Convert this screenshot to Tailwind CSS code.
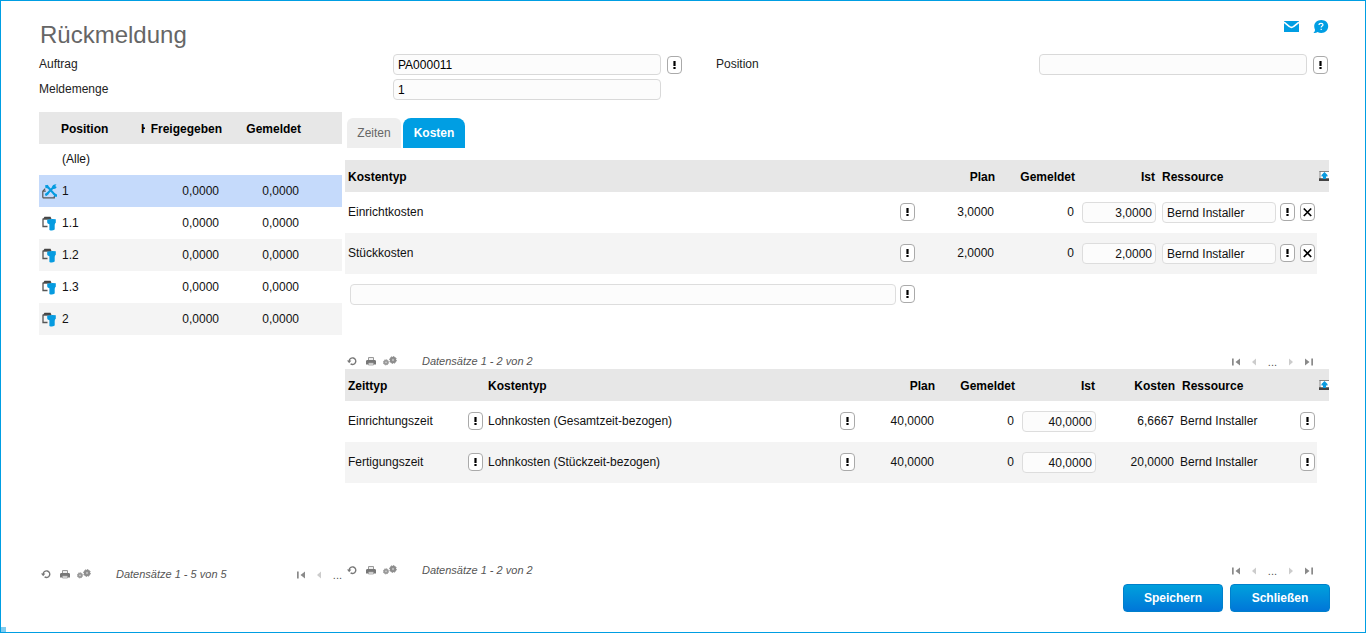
<!DOCTYPE html>
<html lang="de">
<head>
<meta charset="utf-8">
<meta name="viewport" content="width=device-width, initial-scale=1">
<title>Rückmeldung</title>
<script src="https://cdn.jsdelivr.net/npm/@tailwindcss/browser@4"></script>
</head>
<body class="bg-white font-['Liberation_Sans',Arial,sans-serif] text-[12px] leading-4 text-black">

<svg class="hidden" aria-hidden="true">
  <symbol id="i-bang" viewBox="0 0 15 18"><path d="M6.400 5h2.200v5H6.400zM6.400 11h2.200v2H6.400z" fill="#000"/></symbol>
  <symbol id="i-cross" viewBox="0 0 15 18"><path d="M3.800 5.500L11.200 13M11.200 5.500L3.800 13" stroke="#000" stroke-width="1.700" fill="none"/></symbol>
  <symbol id="i-reload" viewBox="0 0 10 10"><path d="M2.200 5A3.300 3.300 0 1 1 3.600 7.900" stroke="#777" stroke-width="1.400" fill="none"/><path d="M0 4.600h4.400L2.200 7.200z" fill="#777"/></symbol>
  <symbol id="i-print" viewBox="0 0 10 10"><path d="M2.500 4V1.500h5V4" fill="#eee" stroke="#999" stroke-width="1"/><path d="M.8 4h8.400L10 5V8.500H0V5z" fill="#777"/><path d="M2.500 7h5v2h-5z" fill="#eee" stroke="#999" stroke-width=".8"/></symbol>
  <symbol id="i-gears" viewBox="0 0 14 10"><circle cx="3" cy="6.300" r="2.600" fill="#999"/><circle cx="3" cy="6.300" r="2.700" fill="none" stroke="#999" stroke-width=".8" stroke-dasharray="1.200 .9"/><circle cx="3" cy="6.300" r=".9" fill="#ccc"/><circle cx="10" cy="4" r="3.200" fill="#8c8c8c"/><circle cx="10" cy="4" r="3.400" fill="none" stroke="#8c8c8c" stroke-width="1" stroke-dasharray="1.500 1.100"/><circle cx="10" cy="4" r="1.200" fill="#bbb"/></symbol>
  <symbol id="i-first" viewBox="0 0 8 8"><path d="M0 .5h1.700v7H0zM8 .5v7L3.500 4z" fill="#8a8a8a"/></symbol>
  <symbol id="i-last" viewBox="0 0 8 8"><path d="M6.300 .5H8v7H6.300zM0 .5v7L4.500 4z" fill="#8a8a8a"/></symbol>
  <symbol id="i-prev" viewBox="0 0 4 8"><path d="M4 .5v7L0 4z" fill="#ccc"/></symbol>
  <symbol id="i-next" viewBox="0 0 4 8"><path d="M0 .5v7L4 4z" fill="#ccc"/></symbol>
  <symbol id="i-export" viewBox="0 0 10 10"><path d="M.5 0h9.500v7H.5z" fill="#fff"/><path d="M.5 .5h9.500M1 0v8" stroke="#777" stroke-width=".9" fill="none"/><path d="M0 7.300h10V10H0z" fill="#444"/><path d="M4 8V5.500H2.500V4l3-3 3 3v1.500H7V8z" fill="#0a9be0"/></symbol>
  <symbol id="i-part" viewBox="0 0 15 15"><path d="M1 3L2.500 .8h6L9.500 3z" fill="#444"/><path d="M5.500 10.500H1V3.200h8" fill="none" stroke="#555" stroke-width="1.300"/><path d="M5.200 3.800Q9.500 2.300 13.800 3.300V6.800Q12.800 7.400 12.700 9V13.600Q10 15.200 7.400 14V8.200Q5.200 7.800 5.200 6.500z" fill="#069be0"/></symbol>
  <symbol id="i-tools" viewBox="0 0 15 15"><path d="M.8 13.800V7.200L3.200 4.700M.8 7.200h3M.8 13.800h11.500V12" fill="none" stroke="#555" stroke-width="1.200"/><path d="M4.500 1.500L13 11M13 1.500L4 11" stroke="#069be0" stroke-width="2" fill="none"/><path d="M10 3.500Q10.300 .3 14.500 .3L13 2.200 14.800 3Q13.500 5.600 10.800 4.800zM3.300 1l3 .3-.6 3.200-2.400-.8zM2.800 10l3-2 1 2-3 2.200zM11 8.500l4 2v2.200h-2.500z" fill="#069be0"/></symbol>
</svg>

<main class="relative flex min-h-screen flex-col border border-[#009ee3] pt-[18px] pr-9 pb-5 pl-[38px]">
  <header class="flex items-start justify-between">
    <h1 class="pl-px text-2xl leading-8 text-[#666]">Rückmeldung</h1>
    <div class="flex gap-3.5 pt-px">
      <a href="#" aria-label="Nachricht"><svg class="h-3.5 w-4" viewBox="0 0 16 14"><path d="M1 1h15v11H1z" fill="#009ee3"/><path d="M1 2.200L6.500 6.500Q8.500 8.200 10.500 6.500L16 2.200" fill="none" stroke="#fff" stroke-width="1.600"/></svg></a>
      <a href="#" aria-label="Hilfe"><svg class="h-3.5 w-4" viewBox="0 0 16 14"><path d="M8.300 0C12.500 0 15.200 2.800 15.200 6.300S12.500 13 8.300 13C6.800 13 5.600 12.700 4.500 12.100 3.500 12.900 2 13.200 .4 13.100 1.500 12.200 2 11 2 9.800 1.500 8.800 1.200 7.600 1.200 6.300 1.200 2.800 4.200 0 8.300 0z" fill="#009ee3"/><path d="M6 5Q6 3.300 8 3.300T10 4.800Q10 5.700 8.800 6.200 8.200 6.500 8.200 7.600M8.200 8.700V10" fill="none" stroke="#fff" stroke-width="1.200"/></svg></a>
    </div>
  </header>

  <form class="mt-[3px] grid grid-cols-[354px_minmax(0,1fr)_21px_34px_323px_minmax(0,1fr)_22px] items-center gap-y-1 text-[#222]">
    <label for="auftrag" class="pb-0.5">Auftrag</label>
    <input id="auftrag" type="text" value="PA000011" class="h-[21px] w-full rounded border border-[#d9d9d9] bg-[#fcfcfc] px-1 text-black">
    <button type="button" aria-label="Auftrag wählen" class="ml-1.5 h-[18px] w-[15px] rounded border border-[#aaa] bg-white"><svg class="-m-px h-[18px] w-[15px]"><use href="#i-bang"/></svg></button>
    <span></span>
    <label for="position" class="pb-0.5">Position</label>
    <input id="position" type="text" class="h-[21px] w-full rounded border border-[#d9d9d9] bg-[#fcfcfc] px-1 text-black">
    <button type="button" aria-label="Position wählen" class="ml-1.5 h-[18px] w-[15px] rounded border border-[#aaa] bg-white"><svg class="-m-px h-[18px] w-[15px]"><use href="#i-bang"/></svg></button>
    <label for="menge" class="pb-0.5">Meldemenge</label>
    <input id="menge" type="text" value="1" class="h-[21px] w-full rounded border border-[#d9d9d9] bg-[#fcfcfc] px-1 text-black">
  </form>

  <div class="mt-3 grid grow grid-cols-[303px_minmax(0,1fr)] gap-x-[3px]">
    <section class="flex flex-col justify-between overflow-hidden" aria-label="Positionen">
      <table class="w-full table-fixed">
        <colgroup><col class="w-5"><col class="w-[82px]"><col class="w-1"><col class="w-[79px]"><col class="w-20"><col></colgroup>
        <thead>
          <tr class="h-8 bg-[#e7e7e7]">
            <th class="pt-0.5"></th><th class="pt-0.5 pl-0.5 text-left">Position</th>
            <th class="pt-0.5 text-left"><div class="overflow-hidden">H</div></th>
            <th class="pt-0.5 pr-0.5 text-right">Freigegeben</th><th class="pt-0.5 pr-[3px] text-right">Gemeldet</th><th></th>
          </tr>
        </thead>
        <tbody class="text-[#111]">
          <tr class="h-[31px]"><td></td><td class="pb-0.5 pl-[3px]">(Alle)</td><td></td><td></td><td></td><td></td></tr>
          <tr class="h-8 bg-[#c5dafb]"><td class="pl-[3px]"><svg class="h-[15px] w-[15px]"><use href="#i-tools"/></svg></td><td class="pl-[3px]">1</td><td></td><td class="pr-[5px] text-right">0,0000</td><td class="pr-[5px] text-right">0,0000</td><td></td></tr>
          <tr class="h-8"><td class="pl-[3px]"><svg class="h-[15px] w-[15px]"><use href="#i-part"/></svg></td><td class="pl-[3px]">1.1</td><td></td><td class="pr-[5px] text-right">0,0000</td><td class="pr-[5px] text-right">0,0000</td><td></td></tr>
          <tr class="h-8 bg-[#f4f4f4]"><td class="pl-[3px]"><svg class="h-[15px] w-[15px]"><use href="#i-part"/></svg></td><td class="pl-[3px]">1.2</td><td></td><td class="pr-[5px] text-right">0,0000</td><td class="pr-[5px] text-right">0,0000</td><td></td></tr>
          <tr class="h-8"><td class="pl-[3px]"><svg class="h-[15px] w-[15px]"><use href="#i-part"/></svg></td><td class="pl-[3px]">1.3</td><td></td><td class="pr-[5px] text-right">0,0000</td><td class="pr-[5px] text-right">0,0000</td><td></td></tr>
          <tr class="h-8 bg-[#f4f4f4]"><td class="pl-[3px]"><svg class="h-[15px] w-[15px]"><use href="#i-part"/></svg></td><td class="pl-[3px]">2</td><td></td><td class="pr-[5px] text-right">0,0000</td><td class="pr-[5px] text-right">0,0000</td><td></td></tr>
        </tbody>
      </table>
      <footer class="flex h-4 items-center justify-between text-[11px] text-[#555]">
        <div class="flex items-center pl-0.5">
          <button type="button" aria-label="Aktualisieren"><svg class="h-2.5 w-2.5"><use href="#i-reload"/></svg></button>
          <button type="button" aria-label="Drucken" class="ml-[9px]"><svg class="h-2.5 w-2.5"><use href="#i-print"/></svg></button>
          <button type="button" aria-label="Einstellungen" class="ml-[7px]"><svg class="h-2.5 w-3.5"><use href="#i-gears"/></svg></button>
          <em class="ml-[25px]">Datensätze 1 - 5 von 5</em>
        </div>
        <div class="flex items-center pt-0.5">
          <button type="button" aria-label="Erste Seite"><svg class="h-2 w-2"><use href="#i-first"/></svg></button>
          <button type="button" aria-label="Vorherige Seite" class="ml-3"><svg class="h-2 w-1"><use href="#i-prev"/></svg></button>
          <span class="ml-3">...</span>
        </div>
      </footer>
    </section>

    <section class="min-w-0 pt-1.5 pb-1">
      <nav class="flex h-[30px] gap-0.5 pl-0.5" role="tablist">
        <button type="button" role="tab" class="w-[54px] rounded-t-md bg-[#eee] text-[#666]">Zeiten</button>
        <button type="button" role="tab" aria-selected="true" class="w-[62px] rounded-t-lg bg-[#009ee3] font-bold text-white">Kosten</button>
      </nav>

      <div class="mt-3 flex min-h-[209px] flex-col justify-between">
        <table class="w-full table-fixed text-[#111]">
          <colgroup><col><col class="w-20"><col class="w-20"><col class="w-20"><col class="w-40"><col class="w-3"></colgroup>
          <thead class="text-black">
            <tr class="h-8 bg-[#e7e7e7]">
              <th class="pt-0.5 pl-[3px] text-left">Kostentyp</th><th class="pt-0.5 pr-0.5 text-right">Plan</th><th class="pt-0.5 pr-0.5 text-right">Gemeldet</th><th class="pt-0.5 pr-0.5 text-right">Ist</th><th class="pt-0.5 pl-[5px] text-left">Ressource</th>
              <th><button type="button" aria-label="Exportieren" class="ml-0.5 block"><svg class="h-2.5 w-2.5"><use href="#i-export"/></svg></button></th>
            </tr>
          </thead>
          <tbody>
            <tr class="h-[41px]">
              <td class="pr-0.5 pb-0.5 pl-[3px]"><div class="flex items-center justify-between">Einrichtkosten<button type="button" aria-label="Kostentyp anzeigen" class="h-[18px] w-[15px] rounded border border-[#aaa] bg-white"><svg class="-m-px h-[18px] w-[15px]"><use href="#i-bang"/></svg></button></div></td>
              <td class="pr-[3px] pb-0.5 text-right">3,0000</td><td class="pr-[3px] pb-0.5 text-right">0</td>
              <td class="pr-px pl-[5px]"><input type="text" aria-label="Ist Einrichtkosten" value="3,0000" class="block h-[21px] w-full rounded border border-[#ddd] bg-[#fcfcfc] px-[3px] text-right"></td>
              <td class="pr-0.5 pl-[5px]"><div class="flex items-start"><input type="text" aria-label="Ressource Einrichtkosten" value="Bernd Installer" class="h-[21px] w-[114px] rounded border border-[#ddd] bg-[#fcfcfc] px-1"><button type="button" aria-label="Ressource wählen" class="mt-px ml-1 h-[18px] w-[15px] rounded border border-[#aaa] bg-white"><svg class="-m-px h-[18px] w-[15px]"><use href="#i-bang"/></svg></button><button type="button" aria-label="Zeile löschen" class="mt-px ml-[5px] h-[18px] w-[15px] rounded border border-[#aaa] bg-white"><svg class="-m-px h-[18px] w-[15px]"><use href="#i-cross"/></svg></button></div></td>
              <td></td>
            </tr>
            <tr class="h-[41px]">
              <td class="bg-[#f4f4f4] pr-0.5 pb-0.5 pl-[3px]"><div class="flex items-center justify-between">Stückkosten<button type="button" aria-label="Kostentyp anzeigen" class="h-[18px] w-[15px] rounded border border-[#aaa] bg-white"><svg class="-m-px h-[18px] w-[15px]"><use href="#i-bang"/></svg></button></div></td>
              <td class="bg-[#f4f4f4] pr-[3px] pb-0.5 text-right">2,0000</td><td class="bg-[#f4f4f4] pr-[3px] pb-0.5 text-right">0</td>
              <td class="bg-[#f4f4f4] pr-px pl-[5px]"><input type="text" aria-label="Ist Stückkosten" value="2,0000" class="block h-[21px] w-full rounded border border-[#ddd] bg-[#fcfcfc] px-[3px] text-right"></td>
              <td class="bg-[#f4f4f4] pr-0.5 pl-[5px]"><div class="flex items-start"><input type="text" aria-label="Ressource Stückkosten" value="Bernd Installer" class="h-[21px] w-[114px] rounded border border-[#ddd] bg-[#fcfcfc] px-1"><button type="button" aria-label="Ressource wählen" class="mt-px ml-1 h-[18px] w-[15px] rounded border border-[#aaa] bg-white"><svg class="-m-px h-[18px] w-[15px]"><use href="#i-bang"/></svg></button><button type="button" aria-label="Zeile löschen" class="mt-px ml-[5px] h-[18px] w-[15px] rounded border border-[#aaa] bg-white"><svg class="-m-px h-[18px] w-[15px]"><use href="#i-cross"/></svg></button></div></td>
              <td></td>
            </tr>
            <tr class="h-[41px]">
              <td class="pr-0.5 pl-[5px]"><div class="flex items-start gap-1"><input type="text" aria-label="Neuer Kostentyp" class="h-[21px] min-w-0 grow rounded border border-[#ddd] bg-[#fcfcfc] px-1"><button type="button" aria-label="Kostentyp wählen" class="mt-px h-[18px] w-[15px] rounded border border-[#aaa] bg-white"><svg class="-m-px h-[18px] w-[15px]"><use href="#i-bang"/></svg></button></div></td>
              <td></td><td></td><td></td><td></td><td></td>
            </tr>
          </tbody>
        </table>
        <footer class="flex h-4 items-center justify-between pr-4 text-[11px] text-[#555]">
          <div class="flex items-center pl-0.5">
            <button type="button" aria-label="Aktualisieren"><svg class="h-2.5 w-2.5"><use href="#i-reload"/></svg></button>
            <button type="button" aria-label="Drucken" class="ml-[9px]"><svg class="h-2.5 w-2.5"><use href="#i-print"/></svg></button>
            <button type="button" aria-label="Einstellungen" class="ml-[7px]"><svg class="h-2.5 w-3.5"><use href="#i-gears"/></svg></button>
            <em class="ml-[25px]">Datensätze 1 - 2 von 2</em>
          </div>
          <div class="flex items-center gap-3 pt-0.5">
            <button type="button" aria-label="Erste Seite"><svg class="h-2 w-2"><use href="#i-first"/></svg></button>
            <button type="button" aria-label="Vorherige Seite"><svg class="h-2 w-1"><use href="#i-prev"/></svg></button>
            <span>...</span>
            <button type="button" aria-label="Nächste Seite"><svg class="h-2 w-1"><use href="#i-next"/></svg></button>
            <button type="button" aria-label="Letzte Seite"><svg class="h-2 w-2"><use href="#i-last"/></svg></button>
          </div>
        </footer>
      </div>

      <div class="flex min-h-[209px] flex-col justify-between">
        <table class="w-full table-fixed text-[#111]">
          <colgroup><col class="w-[140px]"><col><col class="w-20"><col class="w-20"><col class="w-20"><col class="w-20"><col class="w-[140px]"><col class="w-3"></colgroup>
          <thead class="text-black">
            <tr class="h-8 bg-[#e7e7e7]">
              <th class="pt-0.5 pl-[3px] text-left">Zeittyp</th><th class="pt-0.5 pl-[3px] text-left">Kostentyp</th><th class="pt-0.5 pr-0.5 text-right">Plan</th><th class="pt-0.5 pr-0.5 text-right">Gemeldet</th><th class="pt-0.5 pr-0.5 text-right">Ist</th><th class="pt-0.5 pr-0.5 text-right">Kosten</th><th class="pt-0.5 pl-[5px] text-left">Ressource</th>
              <th><button type="button" aria-label="Exportieren" class="ml-0.5 block"><svg class="h-2.5 w-2.5"><use href="#i-export"/></svg></button></th>
            </tr>
          </thead>
          <tbody>
            <tr class="h-[41px]">
              <td class="pr-0.5 pb-0.5 pl-[3px]"><div class="flex items-center justify-between">Einrichtungszeit<button type="button" aria-label="Zeittyp anzeigen" class="h-[18px] w-[15px] rounded border border-[#aaa] bg-white"><svg class="-m-px h-[18px] w-[15px]"><use href="#i-bang"/></svg></button></div></td>
              <td class="pr-0.5 pb-0.5 pl-[3px]"><div class="flex items-center justify-between">Lohnkosten (Gesamtzeit-bezogen)<button type="button" aria-label="Kostentyp anzeigen" class="h-[18px] w-[15px] rounded border border-[#aaa] bg-white"><svg class="-m-px h-[18px] w-[15px]"><use href="#i-bang"/></svg></button></div></td>
              <td class="pr-[3px] pb-0.5 text-right">40,0000</td><td class="pr-[3px] pb-0.5 text-right">0</td>
              <td class="pr-px pl-[5px]"><input type="text" aria-label="Ist Einrichtungszeit" value="40,0000" class="block h-[21px] w-full rounded border border-[#ddd] bg-[#fcfcfc] px-[3px] text-right"></td>
              <td class="pr-[3px] pb-0.5 text-right">6,6667</td>
              <td class="pr-0.5 pb-0.5 pl-[3px]"><div class="flex items-center justify-between">Bernd Installer<button type="button" aria-label="Ressource anzeigen" class="h-[18px] w-[15px] rounded border border-[#aaa] bg-white"><svg class="-m-px h-[18px] w-[15px]"><use href="#i-bang"/></svg></button></div></td>
              <td></td>
            </tr>
            <tr class="h-[41px]">
              <td class="bg-[#f4f4f4] pr-0.5 pb-0.5 pl-[3px]"><div class="flex items-center justify-between">Fertigungszeit<button type="button" aria-label="Zeittyp anzeigen" class="h-[18px] w-[15px] rounded border border-[#aaa] bg-white"><svg class="-m-px h-[18px] w-[15px]"><use href="#i-bang"/></svg></button></div></td>
              <td class="bg-[#f4f4f4] pr-0.5 pb-0.5 pl-[3px]"><div class="flex items-center justify-between">Lohnkosten (Stückzeit-bezogen)<button type="button" aria-label="Kostentyp anzeigen" class="h-[18px] w-[15px] rounded border border-[#aaa] bg-white"><svg class="-m-px h-[18px] w-[15px]"><use href="#i-bang"/></svg></button></div></td>
              <td class="bg-[#f4f4f4] pr-[3px] pb-0.5 text-right">40,0000</td><td class="bg-[#f4f4f4] pr-[3px] pb-0.5 text-right">0</td>
              <td class="bg-[#f4f4f4] pr-px pl-[5px]"><input type="text" aria-label="Ist Fertigungszeit" value="40,0000" class="block h-[21px] w-full rounded border border-[#ddd] bg-[#fcfcfc] px-[3px] text-right"></td>
              <td class="bg-[#f4f4f4] pr-[3px] pb-0.5 text-right">20,0000</td>
              <td class="bg-[#f4f4f4] pr-0.5 pb-0.5 pl-[3px]"><div class="flex items-center justify-between">Bernd Installer<button type="button" aria-label="Ressource anzeigen" class="h-[18px] w-[15px] rounded border border-[#aaa] bg-white"><svg class="-m-px h-[18px] w-[15px]"><use href="#i-bang"/></svg></button></div></td>
              <td></td>
            </tr>
          </tbody>
        </table>
        <footer class="flex h-4 items-center justify-between pr-4 text-[11px] text-[#555]">
          <div class="flex items-center pl-0.5">
            <button type="button" aria-label="Aktualisieren"><svg class="h-2.5 w-2.5"><use href="#i-reload"/></svg></button>
            <button type="button" aria-label="Drucken" class="ml-[9px]"><svg class="h-2.5 w-2.5"><use href="#i-print"/></svg></button>
            <button type="button" aria-label="Einstellungen" class="ml-[7px]"><svg class="h-2.5 w-3.5"><use href="#i-gears"/></svg></button>
            <em class="ml-[25px]">Datensätze 1 - 2 von 2</em>
          </div>
          <div class="flex items-center gap-3 pt-0.5">
            <button type="button" aria-label="Erste Seite"><svg class="h-2 w-2"><use href="#i-first"/></svg></button>
            <button type="button" aria-label="Vorherige Seite"><svg class="h-2 w-1"><use href="#i-prev"/></svg></button>
            <span>...</span>
            <button type="button" aria-label="Nächste Seite"><svg class="h-2 w-1"><use href="#i-next"/></svg></button>
            <button type="button" aria-label="Letzte Seite"><svg class="h-2 w-2"><use href="#i-last"/></svg></button>
          </div>
        </footer>
      </div>
    </section>
  </div>

  <div class="-mr-px mt-0.5 flex justify-end gap-[7px] font-bold text-white">
    <button type="button" class="h-7 w-[100px] rounded border border-[#0080cc] bg-linear-to-b from-[#00a0dc] to-[#0076d8]">Speichern</button>
    <button type="button" class="h-7 w-[100px] rounded border border-[#0080cc] bg-linear-to-b from-[#00a0dc] to-[#0076d8]">Schließen</button>
  </div>
  <span class="absolute bottom-0 left-0 h-[5px] w-[5px] bg-[#80cdf0]"></span>
</main>
</body>
</html>
